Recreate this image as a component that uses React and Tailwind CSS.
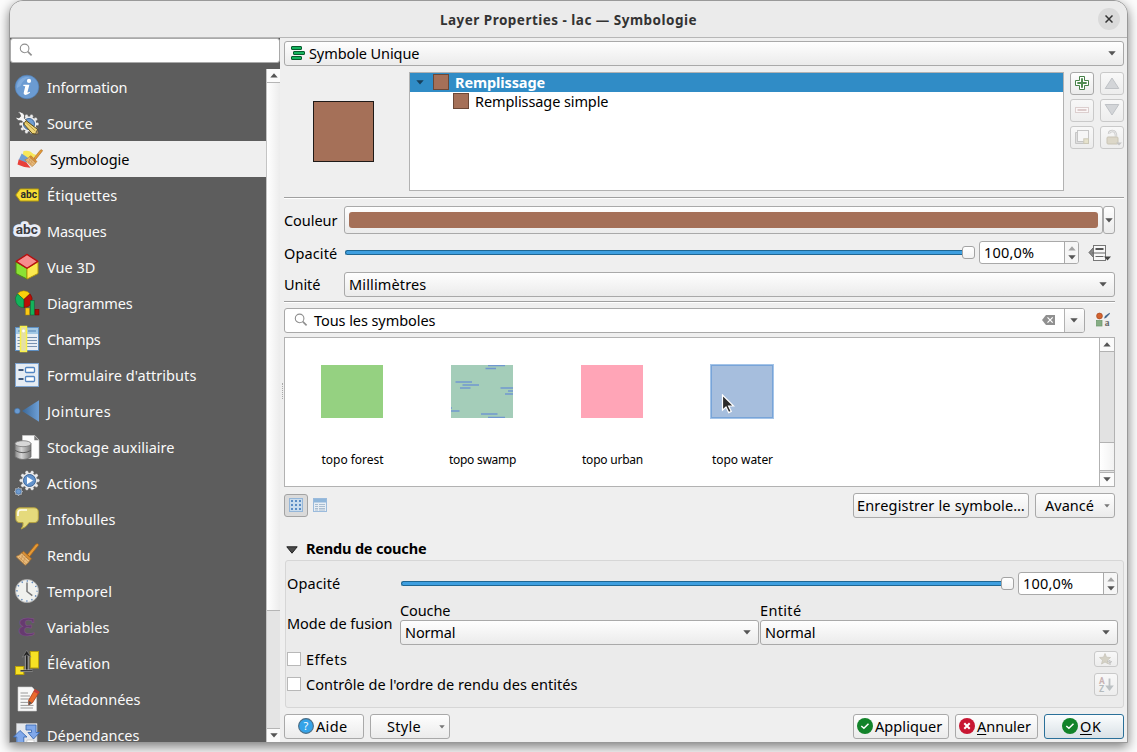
import { useLayoutEffect, useRef, useState } from "react";

/* Text fitted to a given advance width through letter spacing. */
function T({ w, className = "", children }) {
  const ref = useRef(null);
  const [ls, setLs] = useState(0);
  useLayoutEffect(() => {
    const el = ref.current;
    const natural = el.getBoundingClientRect().width - ls * el.textContent.length;
    setLs((w - 0.6 - natural) / el.textContent.length);
  }, [w]);
  return (
    <span ref={ref} className={"inline-block shrink-0 whitespace-pre " + className} style={{ letterSpacing: ls + "px" }}>
      {children}
    </span>
  );
}

const FACE = "border border-[#a9a9a9] rounded-[3px] bg-linear-to-b from-[#fefefe] to-[#ebebeb]";
const FACE_OFF = "border border-[#c9c9c9] rounded-[3px] bg-linear-to-b from-[#f8f8f8] to-[#ededed]";

function Down({ className = "", fill = "#555" }) {
  return (
    <svg className={"shrink-0 " + className} width="8" height="5" viewBox="0 0 8 5">
      <path d="M0.3 0.3H7.7L4 4.6Z" fill={fill} />
    </svg>
  );
}
function Up({ className = "", fill = "#555" }) {
  return (
    <svg className={"shrink-0 " + className} width="8" height="5" viewBox="0 0 8 5">
      <path d="M0.3 4.6H7.7L4 0.3Z" fill={fill} />
    </svg>
  );
}

function Magnifier() {
  return (
    <svg width="14" height="14" viewBox="0 0 14 14" fill="none" stroke="#8f8f8f" className="mb-px shrink-0">
      <circle cx="5.6" cy="5.4" r="4.3" strokeWidth="1.1" />
      <path d="M8.8 8.6L12.6 12.4" strokeWidth="1.6" />
    </svg>
  );
}

function Combo({ className = "", children }) {
  return (
    <div className={"flex h-[25px] shrink-0 items-center pl-1 pr-[7px] " + FACE + " " + className}>
      {children}
      <Down className="ml-auto" />
    </div>
  );
}

function Spin() {
  return (
    <div className="flex h-[23px] w-[100px] shrink-0 items-center overflow-hidden rounded-[3px] border border-[#a9a9a9] bg-white pl-1">
      <T w={51} className="mb-px">100,0%</T>
      <div className="ml-auto flex h-full w-[14px] flex-col items-center justify-center gap-1 border-l border-[#a9a9a9] bg-[#f6f6f6]">
        <Up fill="#a2a2a2" />
        <Down />
      </div>
    </div>
  );
}

function Slider({ className = "" }) {
  return (
    <div className={"flex h-[13px] items-center " + className}>
      <div className="h-[5px] min-w-0 flex-1 rounded-l-[3px] border border-r-0 border-[#1f6793] bg-[#3e9fe0]" />
      <div className="h-[13px] w-[13px] shrink-0 rounded-[3px] border border-[#a3a3a3] bg-linear-to-b from-white to-[#f3f3f3]" />
    </div>
  );
}

function Rule({ className = "" }) {
  return <div className={"h-[2px] shrink-0 border-t border-[#a0a0a0] bg-white " + className} />;
}

function Gear({ cx, cy, r, fill = "#ececec", n = 10 }) {
  const lobe = r * 0.2;
  const teeth = Array.from({ length: n }, (_, i) => {
    const a = (i * 2 * Math.PI) / n;
    return [cx + Math.cos(a) * (r - lobe * 0.6), cy + Math.sin(a) * (r - lobe * 0.6)];
  });
  return (
    <g>
      {teeth.map(([x, y], i) => (
        <circle key={i} cx={x} cy={y} r={lobe} fill={fill} stroke="#444" strokeOpacity="0.6" strokeWidth="0.8" />
      ))}
      <circle cx={cx} cy={cy} r={r - lobe} fill={fill} />
    </g>
  );
}

const Brush = () => (
  <g>
    <path d="M12.5 11.5L20.8 1.2Q22.5 0 23.4 1.4Q23.8 2.3 22.6 3.4L14.6 13.5Z" fill="#e59a36" stroke="#a8651a" strokeWidth="0.8" />
    <path d="M8.5 8.2L16.6 15.8L14.8 17.6L6.8 10Z" fill="#d98f35" stroke="#a8651a" strokeWidth="0.6" />
    <path d="M6.8 10Q4.5 12.5 1 13.6L10.2 22.3Q13.5 20 14.8 17.6Z" fill="#e8bb7c" stroke="#b17a36" strokeWidth="0.8" />
    <path d="M4 14L11 20.8M6 12.5L12.8 18.8M8 20L11 12M5.5 17.6L8.6 10.8" stroke="#c98f4c" strokeWidth="0.7" />
  </g>
);

const icons = {
  info: (
    <g>
      <circle cx="12" cy="12" r="11.8" fill="#6b9bd2" stroke="#4d7fbb" strokeWidth="0.6" />
      <path d="M2 13A10 10 0 0 1 15 2.5Q8 4 5.5 11Z" fill="#8db5e3" opacity="0.6" />
      <circle cx="14" cy="5.9" r="2.1" fill="#fff" />
      <path d="M8.5 9.8H14.4L12.4 17.3Q12.5 18 14.8 16.8L15 17.8Q12 20.3 9.8 19.8Q8.2 19.2 8.8 17.2L10.3 11.3L8.2 11Z" fill="#fff" />
    </g>
  ),
  source: (
    <g>
      <Gear cx={14} cy={13} r={9.3} />
      <circle cx="14" cy="13" r="5.5" fill="#6f9cd0" stroke="#41689a" />
      <path d="M2.2 1.3Q5.5 0 8.5 2.4Q10.3 4.6 9.3 7.2L13 11L10.3 13.6L6.5 9.8Q3 10.5 1 7.6L0.8 6L4 6.9L5.6 5.2L4.8 2.8Z" fill="#f5f5f5" stroke="#505050" strokeWidth="0.8" />
      <path d="M11 9.6L22.6 18.4L21.3 23.2L17.3 22.5L8.8 13Z" fill="#eed578" stroke="#5f4c13" strokeWidth="1" />
      <path d="M11 11.5L20.5 20.3" stroke="#b69638" strokeWidth="0.9" />
      <path d="M22.6 18.4L24 22.6L20 23.6Z" fill="#a38a5c" stroke="#444" strokeWidth="0.6" />
    </g>
  ),
  symb: (
    <g>
      <path d="M6 4Q12 2.5 16 7L19 8L13 13L5 8.5Z" fill="#f8e85a" />
      <path d="M4.2 6.5L11.5 11.5L8.5 16L1.2 13Z" fill="#6f9fd4" />
      <path d="M1.2 12.5L9 15.5L13 20.8Q6 20.500 0 17.5Z" fill="#e8403a" />
      <g transform="translate(6.6,2.2) scale(.78)"><Brush /></g>
    </g>
  ),
  label: (
    <g>
      <path d="M5.2 6H23.5V18H5.2L0.8 12Z" fill="#f8de35" stroke="#b39a0c" strokeWidth="1" />
      <text x="5.5" y="15" fontFamily="Roboto" fontWeight="700" fontSize="10" textLength="16.5" lengthAdjust="spacingAndGlyphs" fill="#2b2b2b">abc</text>
    </g>
  ),
  mask: (
    <g>
      <g stroke="#e9edf8" strokeWidth="5.5" strokeLinejoin="round">
        <text x="0.8" y="15" fontFamily="Roboto" fontWeight="700" fontSize="12.5" textLength="22" lengthAdjust="spacingAndGlyphs" fill="#e9edf8">abc</text>
      </g>
      <text x="0.8" y="15" fontFamily="Roboto" fontWeight="700" fontSize="12.5" textLength="22" lengthAdjust="spacingAndGlyphs" fill="#3b3b40">abc</text>
    </g>
  ),
  cube: (
    <g strokeLinejoin="round">
      <path d="M1 7L12 13.5V24L1 18.5Z" fill="#8ae234" stroke="#4c8a12" />
      <path d="M23 7L12 13.5V24L23 18.5Z" fill="#fce94f" stroke="#b89c0a" />
      <path d="M12 -0.6L22.8 6.4L12 13.3L1.2 6.4Z" fill="#f78d8d" stroke="#b80f0f" strokeWidth="1.3" />
    </g>
  ),
  diagram: (
    <g stroke="#2f2f2f" strokeWidth="0.5">
      <path d="M8.8 8.5L2.5 2.8A8 8 0 0 1 15 2.8Z" fill="#fbd20a" stroke="#a98200" />
      <path d="M8.8 8.5L15 2.8A8.2 8.2 0 0 1 8.8 16.5Z" fill="#bb1006" stroke="#6a0500" />
      <path d="M8.8 8.5V16.5A8.2 8.2 0 0 1 2.5 2.8Z" fill="#12b35b" stroke="#07622d" />
      <rect x="10.5" y="17" width="4" height="7" fill="#fbc813" stroke="#a98200" />
      <rect x="15.4" y="9.5" width="3.8" height="14.5" fill="#12b35b" stroke="#07622d" />
      <rect x="20" y="18.3" width="4" height="5.7" fill="#a90a04" stroke="#6a0500" />
    </g>
  ),
  fields: (
    <g>
      <rect x="0.5" y="0.5" width="23" height="23" fill="#e8edf4" stroke="#5e8fc2" />
      <rect x="1" y="1" width="22" height="6" fill="#a3c8e4" />
      <path d="M3 4H6M13 4H21" stroke="#5583b5" />
      <path d="M2.5 10.5H22M2.5 13.5H22M2.5 16.5H22M2.5 19.5H22" stroke="#7791b0" />
      <rect x="5.5" y="-0.5" width="6" height="25" fill="#e4dfa8" stroke="#f8f04a" strokeWidth="1.5" />
      <circle cx="8.5" cy="4" r="1.4" fill="#fff" />
    </g>
  ),
  form: (
    <g>
      <rect x="0.5" y="0.5" width="23" height="23" fill="#e6ecf3" stroke="#7ea4d0" />
      <rect x="10.5" y="4.5" width="9" height="5" rx="1" fill="#fff" stroke="#5285c2" strokeWidth="1.3" />
      <rect x="10.5" y="13.5" width="9" height="5" rx="1" fill="#fff" stroke="#5285c2" strokeWidth="1.3" />
      <path d="M3.5 7H8.5M3.5 16H8.5" stroke="#40597c" strokeWidth="2" />
    </g>
  ),
  join: (
    <g>
      <circle cx="2.3" cy="12" r="2.8" fill="#6a9bd2" stroke="#416f9f" strokeWidth="0.6" />
      <path d="M7 12L24 1.2V22.8Z" fill="url(#jg)" />
    </g>
  ),
  storage: (
    <g>
      <path d="M7.5 0.5H19.8L24 5V23.5H7.5Z" fill="#fdfdfd" stroke="#ccc" strokeWidth="0.6" />
      <path d="M19.3 0.5V5.3H24Z" fill="#777" />
      <path d="M0 8.5V22Q8 27 16 22V8.5Z" fill="url(#cy)" stroke="#6a6a6a" strokeWidth="0.8" />
      <ellipse cx="8" cy="8.7" rx="8" ry="3" fill="#d7d7d7" stroke="#777" strokeWidth="0.8" />
      <path d="M0 15.4Q8 20 16 15.4" fill="none" stroke="#5c5c5c" />
    </g>
  ),
  actions: (
    <g>
      <Gear cx={14.5} cy={9.5} r={9.6} n={10} />
      <circle cx="14.5" cy="9.5" r="6" fill="#6393cc" stroke="#3e6698" />
      <path d="M12 5.8V13.2L18 9.5Z" fill="#fff" />
      <Gear cx={3.5} cy={20.5} r={4.2} n={8} fill="#dfe5ec" />
      <circle cx="3.5" cy="20.5" r="2.7" fill="#6f9cd0" stroke="#3e6698" strokeWidth="0.7" />
    </g>
  ),
  tips: (
    <g>
      <path d="M5 0.8H19Q23.3 0.8 23.3 5V11.5Q23.3 15.6 19 15.6H14Q11.5 20.3 6.2 22Q8.7 18.6 8 15.6H5Q0.8 15.6 0.8 11.5V5Q0.8 0.8 5 0.8Z" fill="#e5da7c" stroke="#b5a23f" />
      <path d="M3 9V6Q3 3 6 3H12" fill="none" stroke="#fffef0" strokeWidth="1.6" />
    </g>
  ),
  render: <Brush />,
  clock: (
    <g>
      <circle cx="12" cy="12" r="11.6" fill="#f0f1ee" stroke="#a8a8a8" strokeWidth="0.8" />
      <circle cx="12" cy="12" r="10" fill="none" stroke="#5c86bb" strokeWidth="1.5" strokeDasharray="1.3 3.936" strokeDashoffset="0.65" />
      <path d="M12 3.5V12.5L17.3 16.6" fill="none" stroke="#777" strokeWidth="1.5" />
    </g>
  ),
  vars: (
    <text x="3" y="20.5" fontFamily="Liberation Serif" fontWeight="700" fontSize="38" fill="#663a70" stroke="#84558e" strokeWidth="0.5" textLength="17" lengthAdjust="spacingAndGlyphs">ε</text>
  ),
  elev: (
    <g>
      <rect x="15.3" y="0.5" width="8.2" height="16.5" fill="#f7e124" stroke="#b89f0a" />
      <rect x="0.5" y="15.5" width="8.3" height="8" fill="#f7e124" stroke="#b89f0a" />
      <path d="M11.7 19V3" fill="none" stroke="#bbb" strokeWidth="3.6" />
      <path d="M11.7 19V3" stroke="#222" strokeWidth="2" />
      <path d="M7.3 6.2L11.7 -0.6L16.1 6.2L11.7 4Z" fill="#222" stroke="#999" strokeWidth="0.5" />
      <path d="M5.5 19.8H17.5" stroke="#bbb" strokeWidth="2.4" />
      <path d="M5.5 19.8H17.5" stroke="#222" strokeWidth="1.2" />
    </g>
  ),
  meta: (
    <g>
      <path d="M3 0H17L21.5 5V24H3Z" fill="#f8f8f8" stroke="#ccc" strokeWidth="0.6" />
      <path d="M5.5 6H13M5.5 9H15M5.5 12H17M5.5 15.4H13M5.5 18.4H18.5M5.5 21H18" stroke="#9a9a9a" />
      <path d="M20 2.3L24.3 5L17.3 16L13.8 17.8L13.7 13.3Z" fill="#e96a2c" stroke="#a9401a" strokeWidth="0.8" />
      <path d="M13.7 13.8L17 16L13.6 18Z" fill="#555" />
      <path d="M20 2.3L24.3 5L23 7L18.6 4.4Z" fill="#c33e3e" />
    </g>
  ),
  deps: (
    <g>
      <path d="M1.5 0.5H22V24H1.5Z" fill="#e4e7ec" stroke="#c4c4c4" strokeWidth="0.6" />
      <path d="M11 2H21V9.5H24.5L18.5 16L13 9.5H16.5V7H11Z" fill="#80a8ea" stroke="#3c6cb4" strokeWidth="0.9" />
      <path d="M5 7.5L12 14H8.8V24H1.8V14H-1.500Z" fill="#80a8ea" stroke="#3c6cb4" strokeWidth="0.9" />
      <path d="M12 17H19V24H11Z" fill="#fff" stroke="#b9b9b9" strokeWidth="0.6" />
    </g>
  ),
};

const items = [
  ["Information", "info", 81],
  ["Source", "source", 46],
  ["Symbologie", "symb", 80],
  ["Étiquettes", "label", 71],
  ["Masques", "mask", 60],
  ["Vue 3D", "cube", 49],
  ["Diagrammes", "diagram", 86],
  ["Champs", "fields", 54],
  ["Formulaire d'attributs", "form", 150],
  ["Jointures", "join", 64.6],
  ["Stockage auxiliaire", "storage", 128],
  ["Actions", "actions", 51],
  ["Infobulles", "tips", 69],
  ["Rendu", "render", 44],
  ["Temporel", "clock", 65.6],
  ["Variables", "vars", 63],
  ["Élévation", "elev", 64],
  ["Métadonnées", "meta", 94],
  ["Dépendances", "deps", 93],
];

function Sidebar() {
  return (
    <div className="flex w-[270px] shrink-0 flex-col bg-[#5d5d5d]">
      <div className="flex h-[25px] shrink-0 items-center rounded-[3px] border border-[#a9a9a9] bg-white pl-2">
        <Magnifier />
      </div>
      <div className="mt-[6px] flex min-h-0 flex-1">
        <div className="flex w-64 flex-col overflow-hidden">
          {items.map(([name, icon, w]) => {
            const on = icon === "symb";
            return (
              <div key={name} className={"flex h-9 shrink-0 items-center " + (on ? "bg-[#efefef] pl-[7px] text-black" : "pl-[5px] text-[#fafafa]")}>
                <svg width={on ? 25 : 24} height="24" viewBox="0 0 24 24" overflow="visible" className="shrink-0">{icons[icon]}</svg>
                <T w={w} className="ml-2">{name}</T>
              </div>
            );
          })}
        </div>
        <div className="flex w-[14px] flex-col border-l border-[#c4c4c4] bg-[#e4e4e4]">
          <div className="flex h-[14px] shrink-0 items-center justify-center border-b border-[#b5b5b5] bg-[#fbfbfb]"><Up /></div>
          <div className="h-[528px] shrink-0 border-b border-[#b5b5b5] bg-linear-to-r from-white to-[#ececec]" />
          <div className="mt-auto flex h-[14px] shrink-0 items-center justify-center border-t border-[#b5b5b5] bg-[#fbfbfb]"><Down /></div>
        </div>
      </div>
    </div>
  );
}

function ToolButton({ off, children }) {
  return <div className={"flex h-[23px] w-6 items-center justify-center " + (off ? FACE_OFF : FACE)}>{children}</div>;
}

function SymbolTools() {
  return (
    <div className="ml-[6px] grid h-[77px] grid-cols-[24px_24px] gap-x-[6px] gap-y-1">
      <ToolButton>
        <svg width="14" height="14" viewBox="0 0 14 14" className="mb-px"><path d="M4.5 .5H9.5V4.5H13.5V9.5H9.5V13.5H4.5V9.5H.5V4.5H4.5Z" fill="#fff" stroke="#478048" /><path d="M7 2.3V11.7M2.3 7H11.7" stroke="#4f8c50" strokeWidth="2" /></svg>
      </ToolButton>
      <ToolButton off>
        <svg width="16" height="12" viewBox="0 0 16 12" className="mb-px"><path d="M8 1L14.8 11.5H1.2Z" fill="#d3d5d8" stroke="#bfc2c6" /></svg>
      </ToolButton>
      <ToolButton off>
        <svg width="14" height="6" viewBox="0 0 14 6" className="mb-px"><rect x=".5" y=".5" width="13" height="5" fill="#fbf7f7" stroke="#dccfcf" /><rect x="2.5" y="2" width="9" height="2" fill="#dccbcb" /></svg>
      </ToolButton>
      <ToolButton off>
        <svg width="16" height="12" viewBox="0 0 16 12" className="mb-px"><path d="M8 11L14.8 .5H1.2Z" fill="#d3d5d8" stroke="#bfc2c6" /></svg>
      </ToolButton>
      <ToolButton off>
        <svg width="14" height="15" viewBox="0 0 14 15" stroke="#c6c6c6"><path d="M.5 2.5V13.5H9.5V11.5H2.5V2.5Z" fill="#dedede" /><rect x="2.5" y=".5" width="11" height="11" fill="#f6f6f6" /><rect x="8.8" y="8.8" width="4.7" height="4.7" fill="#e6e2cc" stroke="#ccc9b8" /></svg>
      </ToolButton>
      <ToolButton off>
        <svg width="18" height="17" viewBox="0 0 18 17" className="ml-[2px]"><path d="M5 5Q5 2 8.5 2Q12 2 12 7.5" fill="none" stroke="#cbcbcb" strokeWidth="2.4" /><path d="M5 5Q5 2 8.5 2Q12 2 12 7.5" fill="none" stroke="#efefef" strokeWidth=".8" /><rect x="3" y="8" width="11" height="7" rx="1" fill="#dcd7c8" stroke="#c9c4b5" /><path d="M12 13.5H18L15 16.5Z" fill="#c4c4c4" /></svg>
      </ToolButton>
    </div>
  );
}

function Swatches() {
  return (
    <div className="flex h-[150px] w-[831px] shrink-0 border border-[#b2b2b2] bg-white text-[12px] leading-4">
      <div className="flex flex-1 pl-[2px] pt-[26px]">
        <div className="flex w-[130px] flex-col items-center">
          <div className="mt-px h-[53px] w-[62px] bg-[#95d181]" />
          <T w={62.6} className="ml-px mt-[34px]">topo forest</T>
        </div>
        <div className="flex w-[130px] flex-col items-center">
          <svg width="62" height="53" viewBox="0 0 62 53" className="mt-px bg-[#a4cdb9]">
            <path d="M37 .5H54M34.5 3.5H45M4.5 17H21M11.5 20H28M9 23H19.5M49.500 23H62M57 26H62M54 29H62M0 43H1M0 46H8.500M30 49H46.500M37 52.500H54" stroke="#7098cf" strokeWidth="1.500" />
          </svg>
          <T w={67.6} className="ml-px mt-[34px]">topo swamp</T>
        </div>
        <div className="flex w-[130px] flex-col items-center">
          <div className="mt-px h-[53px] w-[62px] bg-[#ffa5b7]" />
          <T w={61.6} className="ml-px mt-[34px]">topo urban</T>
        </div>
        <div className="relative flex w-[130px] flex-col items-center">
          <div className="h-[55px] w-16 border border-[#a4c4e8] bg-[#a6bedd]">
            <div className="h-full w-full border border-[#78a4d8]" />
          </div>
          <T w={61.6} className="ml-px mt-[33px]">topo water</T>
          <svg className="absolute left-[44px] top-[30px]" width="14" height="20" viewBox="0 0 14 20">
            <path d="M1.500 1V16.200L5 13L7.700 18.600L10.300 17.400L7.600 12H12.600Z" fill="#2b2b2b" stroke="#fff" strokeWidth="1.200" />
          </svg>
        </div>
      </div>
      <div className="flex w-[15px] flex-col border-l border-[#b2b2b2] bg-[#e2e2e2]">
        <div className="flex h-[14px] items-center justify-center border-b border-[#b2b2b2] bg-[#fbfbfb]"><Up /></div>
        <div className="mt-[90px] h-[29px] border-y border-[#b2b2b2] bg-linear-to-r from-white to-[#f2f2f2]" />
        <div className="mt-[1px] flex flex-1 items-center justify-center border-t border-[#b2b2b2] bg-[#fbfbfb]"><Down /></div>
      </div>
    </div>
  );
}

function Check() {
  return <div className="size-[14px] shrink-0 border border-[#b8b8b8] bg-white" />;
}

function Ok() {
  return (
    <svg width="16" height="16" viewBox="0 0 16 16" className="mb-px shrink-0"><circle cx="8" cy="8" r="8" fill="#12832a" /><path d="M4.300 8L6.900 10.300L11.500 5.700" fill="none" stroke="#fff" strokeWidth="1.500" /></svg>
  );
}

function LayerRendering() {
  return (
    <div className="ml-px flex h-[148px] w-[839px] shrink-0 flex-col rounded-[3px] border border-[#d6d6d6] bg-[#ebebeb] pl-px pr-[5px]">
      <div className="mt-[11px] flex h-[23px] items-center">
        <T w={54} className="mb-px">Opacité</T>
        <Slider className="ml-[60.600px] mr-1 flex-1" />
        <Spin />
      </div>
      <div className="mt-[6px] flex h-[44px]">
        <div className="flex w-[113px] items-center"><T w={106}>Mode de fusion</T></div>
        <div className="flex w-[359px] flex-col">
          <div className="h-[19px] leading-[19px]"><T w={51}>Couche</T></div>
          <Combo><T w={51} className="mb-px">Normal</T></Combo>
        </div>
        <div className="ml-px flex flex-1 flex-col">
          <div className="h-[19px] leading-[19px]"><T w={42}>Entité</T></div>
          <Combo><T w={51} className="mb-px">Normal</T></Combo>
        </div>
      </div>
      <div className="mt-[6px] flex h-4 items-center">
        <Check />
        <T w={42} className="ml-[5px]">Effets</T>
        <div className={"ml-auto flex h-4 w-6 items-center justify-center " + FACE_OFF}>
          <svg width="14" height="13" viewBox="0 0 14 13"><path d="M6 .5L7.500 4.200L11.500 4.500L8.500 7.200L9.500 11L6 9L2.500 11L3.500 7.200L.5 4.500L4.500 4.200Z" fill="#d5d2c6" stroke="#c4c1b6" strokeWidth=".7" /><path d="M8.500 8.500L11 7.500V12M10 10L13 8.500" stroke="#bcbcbc" fill="none" /></svg>
        </div>
      </div>
      <div className="mt-[6px] flex h-[23px] items-center">
        <div className="mb-px"><Check /></div>
        <T w={272} className="mb-px ml-[5px]">Contrôle de l'ordre de rendu des entités</T>
        <div className={"ml-auto flex h-[23px] w-6 items-center justify-center " + FACE_OFF}>
          <svg width="16" height="16" viewBox="0 0 16 16" fontFamily="Roboto" fontWeight="700" fontSize="8.500"><text x="1" y="7" fill="#c8b2b2">A</text><text x="1" y="14.500" fill="#b4babc">Z</text><path d="M11.500 1.500V11" stroke="#bcc1c4" strokeWidth="1.800" /><path d="M7.200 8.500H15.800L11.500 14Z" fill="#bcc1c4" /></svg>
        </div>
      </div>
    </div>
  );
}

function Panel() {
  return (
    <div className="flex w-[847px] flex-col pl-1 pt-[3px]">
      <Combo className="w-[840px] pl-[6px]">
        <svg width="14" height="14" viewBox="0 0 14 14" className="mb-px mr-1" fill="#15b35e" stroke="#075b2d"><rect x=".5" y=".5" width="10" height="3" rx=".5" /><rect x="2.500" y="5.500" width="11" height="3" rx=".5" /><rect x=".5" y="10.500" width="10" height="3" rx=".5" /></svg>
        <T w={111} className="mb-px">Symbole Unique</T>
      </Combo>
      <div className="mt-[6px] flex h-[119px] shrink-0">
        <div className="flex w-[125px] items-center pl-[29px]">
          <div className="size-[61px] border border-[#1f1a18] bg-[#a57058]" />
        </div>
        <div className="w-[655px] border border-[#b2b2b2] bg-white">
          <div className="flex h-[19px] items-center bg-[#308cc6] pl-[6px] text-white">
            <Down fill="#17405c" />
            <div className="mb-px ml-[9px] size-4 border border-[#6b4837] bg-[#a57058]" />
            <T w={90.6} className="mb-px ml-[6px] font-bold">Remplissage</T>
          </div>
          <div className="flex h-[19px] items-center pl-[43px]">
            <div className="mb-px size-4 border border-[#6b4837] bg-[#a57058]" />
            <T w={134} className="mb-px ml-[6px]">Remplissage simple</T>
          </div>
        </div>
        <SymbolTools />
      </div>
      <Rule className="mt-[6px] w-[840px]" />
      <div className="mt-[7px] flex h-7 shrink-0 items-center">
        <div className="w-[60px]"><T w={54}>Couleur</T></div>
        <div className={"flex h-7 w-[759px] items-center px-1 " + FACE}>
          <div className="h-4 flex-1 rounded-[3px] bg-[#a57058]" />
        </div>
        <div className={"flex h-7 w-3 items-center justify-center " + FACE}><Down /></div>
      </div>
      <div className="mt-[7px] flex h-[23px] shrink-0 items-center">
        <div className="w-[61px]"><T w={54}>Opacité</T></div>
        <Slider className="mr-1 w-[630px]" />
        <Spin />
        <svg width="24" height="18" viewBox="0 0 24 18" className="ml-[9px]">
          <path d="M1 8.500L6 3V14Z" fill="#888" stroke="#666" />
          <rect x="5.500" y="1.500" width="12" height="15" fill="#f8f8f8" stroke="#777" />
          <path d="M7.500 5H15.500" stroke="#555" strokeWidth="2" /><path d="M4 9H17.500M7.500 12.500H15.500" stroke="#666" />
          <path d="M16 12.500H23L19.500 16.500Z" fill="#444" />
        </svg>
      </div>
      <div className="mt-2 flex h-[25px] shrink-0 items-center">
        <div className="mb-px flex w-[60px]"><T w={37}>Unité</T></div>
        <Combo className="w-[771px]"><T w={78} className="mb-px">Millimètres</T></Combo>
      </div>
      <Rule className="mt-1 w-[831px]" />
      <div className="mt-[5px] flex h-[25px] shrink-0 items-center">
        <div className="flex h-[25px] w-[801px] items-center overflow-hidden rounded-[3px] border border-[#a9a9a9] bg-white pl-[9px]">
          <Magnifier />
          <T w={122} className="mb-px ml-[6px]">Tous les symboles</T>
          <svg width="13" height="10" viewBox="0 0 13 10" className="mb-px ml-auto mr-[9px]"><path d="M4 0H13V10H4L0 5Z" fill="#909090" /><path d="M5.500 2.300L10.700 7.700M10.700 2.300L5.500 7.700" stroke="#fff" strokeWidth="1.200" /></svg>
          <div className="flex h-full w-5 items-center justify-center border-l border-[#b2b2b2] bg-linear-to-b from-[#fefefe] to-[#ebebeb] pr-[2px]"><Down /></div>
        </div>
        <svg width="16" height="16" viewBox="0 0 16 16" className="mb-px ml-[10px]">
          <circle cx="4.500" cy="4" r="2.900" fill="#d3622f" stroke="#a8481c" strokeWidth=".7" />
          <path d="M9 6.500L10 4L14.500 .8L15 1.800L11 6Z" fill="#47698f" />
          <rect x="1.500" y="8.500" width="5.500" height="5.500" fill="#86ad84" stroke="#6b976a" strokeWidth=".7" />
          <text x="9.800" y="14" fontFamily="Liberation Serif" fontSize="9.500" fontWeight="700" fill="#666">a</text>
        </svg>
      </div>
      <div className="mt-1 flex shrink-0"><Swatches /></div>
      <div className="mt-[6px] flex h-[25px] w-[831px] shrink-0 items-center">
        <div className="flex h-[23px] w-6 items-center justify-center rounded-[3px] border border-[#a3a3a3] bg-[#dadada]">
          <svg width="14" height="14" viewBox="0 0 14 14" className="mb-px"><rect x=".5" y=".5" width="13" height="13" fill="#c9dced" stroke="#94b6d9" /><path d="M2 3H12M2 7H12M2 11H12" stroke="#5b8cc4" strokeWidth="2" strokeDasharray="2 2" /></svg>
        </div>
        <svg width="14" height="14" viewBox="0 0 14 14" className="mb-px ml-[5px]"><rect x=".5" y=".5" width="13" height="13" fill="#e8eef4" stroke="#9bbbdc" /><rect x="1" y="1" width="12" height="3.500" fill="#8fb6da" /><path d="M2 6.500H5M6 6.500H12M2 8.500H5M6 8.500H12M2 10.500H5M6 10.500H12M2 12H5M6 12H12" stroke="#a9bdd0" /></svg>
        <div className={"ml-auto flex h-[25px] w-44 items-center justify-center " + FACE}><T w={168.6} className="mb-px">Enregistrer le symbole…</T></div>
        <div className={"ml-[6px] flex h-[25px] w-20 items-center pl-[9px] " + FACE}>
          <T w={49.6} className="mb-px">Avancé</T>
          <Down className="ml-auto mr-1 h-1 w-[6px]" fill="#777" />
        </div>
      </div>
      <div className="mt-[21px] flex h-5 shrink-0 items-center pl-[2px]">
        <svg width="12" height="8" viewBox="0 0 12 8" className="mt-px shrink-0"><path d="M.8 .8H11.200L6 7.200Z" fill="#4a4a4a" stroke="#222" /></svg>
        <T w={121} className="mb-[2px] ml-2 font-bold">Rendu de couche</T>
      </div>
      <div className="mt-px shrink-0"><LayerRendering /></div>
      <div className="mt-[6px] flex h-[25px] w-[840px] shrink-0 items-center">
        <div className={"flex h-[25px] w-20 items-center pl-[13px] " + FACE}>
          <svg width="16" height="16" viewBox="0 0 16 16" className="mb-px shrink-0"><circle cx="8" cy="8" r="7.400" fill="#35a3e8" stroke="#4d6d84" strokeWidth="1.100" /><text x="8" y="12" textAnchor="middle" fontFamily="Noto Sans" fontSize="11" fill="#fff">?</text></svg>
          <T w={32} className="mb-px ml-[2px]">Aide</T>
        </div>
        <div className={"ml-[6px] flex h-[25px] w-20 items-center pl-4 " + FACE}>
          <T w={34.6} className="mb-px">Style</T>
          <Down className="ml-auto mr-1 h-1 w-[6px]" fill="#777" />
        </div>
        <div className={"ml-auto flex h-[25px] w-24 items-center pl-[3px] " + FACE}><Ok /><T w={68} className="mb-px ml-[2px]">Appliquer</T></div>
        <div className={"ml-[6px] flex h-[25px] w-[83px] items-center pl-[3px] " + FACE}>
          <svg width="16" height="16" viewBox="0 0 16 16" className="mb-px shrink-0"><circle cx="8" cy="8" r="8" fill="#c81632" /><path d="M5.300 5.300L10.700 10.700M10.700 5.300L5.300 10.700" stroke="#fff" strokeWidth="2" /></svg>
          <T w={54.6} className="mb-px ml-[2px]"><span className="underline underline-offset-2">A</span>nnuler</T>
        </div>
        <div className="ml-[6px] flex h-[25px] w-20 items-center rounded-[3px] border border-[#2a7099] bg-linear-to-b from-[#fbfdfe] to-[#d9e1e6] pl-[17px]">
          <Ok /><T w={22} className="mb-px ml-[2px]"><span className="underline underline-offset-2">O</span>K</T>
        </div>
      </div>
    </div>
  );
}

export default function App() {
  return (
    <div className="h-[752px] w-[1137px] overflow-hidden bg-[#fcfcfc] pl-[9px] font-['Noto_Sans',sans-serif] text-[14.500px] leading-[18px] text-black">
      <svg width="0" height="0" className="absolute">
        <defs>
          <linearGradient id="jg"><stop offset="0" stopColor="#3a6797" /><stop offset="1" stopColor="#6d9fd6" /></linearGradient>
          <linearGradient id="cy"><stop offset="0" stopColor="#8a8a8a" /><stop offset=".4" stopColor="#d6d6d6" /><stop offset="1" stopColor="#777" /></linearGradient>
        </defs>
      </svg>
      <div className="flex h-[743px] w-[1119px] flex-col overflow-hidden rounded-t-[14px] border border-[#999] bg-[#efefef] shadow-[0_4px_12px_rgba(0,0,0,0.5)]">
        <div className="flex h-[37px] shrink-0 items-center border-b border-[#b7b7b7] bg-[#ebebeb] pl-[430px] pr-[7px]">
          <T w={257.6} className="mt-[2px] text-[13.500px] font-bold text-[#333]">Layer Properties - lac — Symbologie</T>
          <div className="ml-auto flex size-[22px] items-center justify-center rounded-full bg-[#dadada]">
            <svg width="8" height="8" viewBox="0 0 8 8"><path d="M.5 .5L7.500 7.500M7.500 .5L.5 7.500" stroke="#333" strokeWidth="1.500" /></svg>
          </div>
        </div>
        <div className="flex min-h-0 flex-1">
          <Sidebar />
          <div className="relative flex">
            <Panel />
            <div className="absolute left-[2px] top-[345px] h-4 border-l border-dotted border-[#aaa]" />
          </div>
        </div>
      </div>
    </div>
  );
}
